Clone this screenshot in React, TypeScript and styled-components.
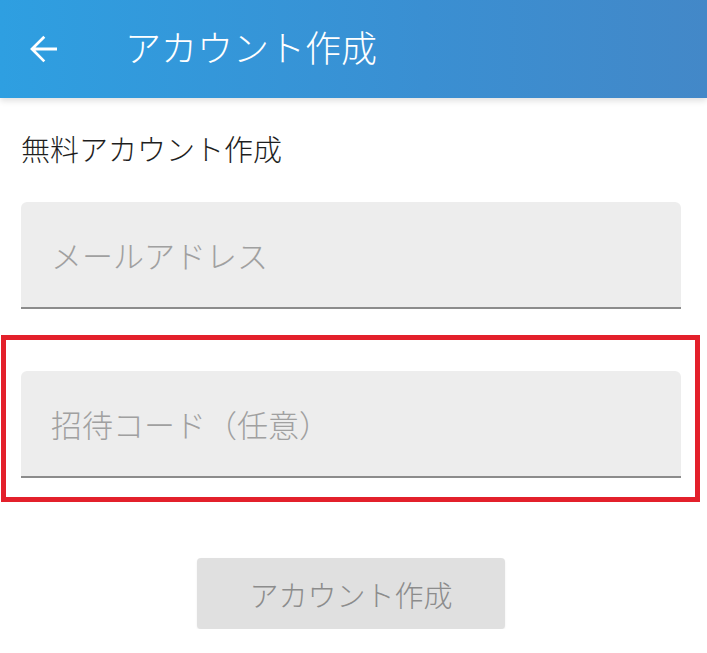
import React from 'react'
import styled, { createGlobalStyle } from 'styled-components'

const FONT = `"Noto Sans CJK JP", Roboto, sans-serif`

const GlobalStyle = createGlobalStyle`
  html, body {
    margin: 0;
    padding: 0;
    background: #ffffff;
    font-family: ${FONT};
  }
`

type FieldProps = {
  readonly placeholder: string
}

const Field: React.FC<FieldProps> = ({ placeholder }: FieldProps) => (
  <StyledField>
    <StyledInput placeholder={placeholder} />
  </StyledField>
)

const BackIcon: React.FC = () => (
  <svg width="42" height="42" viewBox="0 0 24 24" fill="#ffffff">
    <path d="M20 11.1H7.7l5.6-5.6-1.1-1.1L4.6 12l7.6 7.6 1.1-1.1-5.6-5.6H20z" />
  </svg>
)

const App: React.FC = () => (
  <>
    <GlobalStyle />
    <StyledHeader>
      <StyledBackButton aria-label="戻る">
        <BackIcon />
      </StyledBackButton>
      <StyledTitle>アカウント作成</StyledTitle>
    </StyledHeader>
    <StyledContent>
      <StyledSubtitle>無料アカウント作成</StyledSubtitle>
      <Field placeholder="メールアドレス" />
      <StyledHighlight>
        <Field placeholder="招待コード（任意）" />
      </StyledHighlight>
      <StyledSubmitRow>
        <StyledSubmit disabled>アカウント作成</StyledSubmit>
      </StyledSubmitRow>
    </StyledContent>
  </>
)

export default App

const StyledHeader = styled.header`
  display: flex;
  align-items: center;
  height: 98px;
  padding-left: 22px;
  background: linear-gradient(90deg, #2e9fe1 0%, #3a8fd2 60%, #4388c8 100%);
  box-shadow: 0 3px 6px rgba(0, 0, 0, 0.12);
  position: relative;
  z-index: 1;
`

const StyledBackButton = styled.button`
  display: flex;
  align-items: center;
  justify-content: center;
  padding: 0;
  border: none;
  background: transparent;
  width: 42px;
  height: 42px;
`

const StyledTitle = styled.h1`
  margin: 0 0 7px 61px;
  font-family: ${FONT};
  font-weight: 300;
  font-size: 36px;
  line-height: 44px;
  color: #ffffff;
`

const StyledContent = styled.main`
  display: flex;
  flex-direction: column;
  padding: 30px 26px 0 21px;
`

const StyledSubtitle = styled.h2`
  margin: 0 0 34px;
  font-family: ${FONT};
  font-weight: 300;
  font-size: 29px;
  line-height: 40px;
  color: #1e1e1e;
`

const StyledField = styled.div`
  display: flex;
  align-items: center;
  height: 107px;
  padding: 0 0 0 30px;
  box-sizing: border-box;
  background: #ededed;
  border-radius: 6px 6px 0 0;
  border-bottom: 2px solid #8c8c8c;
`

const StyledInput = styled.input`
  flex: 1;
  border: none;
  outline: none;
  background: transparent;
  font-family: ${FONT};
  font-weight: 300;
  font-size: 31px;
  color: #333333;
  padding: 0;

  &::placeholder {
    color: #a0a0a0;
  }
`

const StyledHighlight = styled.div`
  margin: 26px -19px 0 -20px;
  padding: 31px 14px 19px 15px;
  border: 5px solid #e3202b;
`

const StyledSubmitRow = styled.div`
  display: flex;
  justify-content: center;
  padding-top: 56px;
`

const StyledSubmit = styled.button`
  width: 308px;
  height: 71px;
  border: none;
  border-radius: 4px;
  background: #e0e0e0;
  font-family: ${FONT};
  font-weight: 300;
  font-size: 29px;
  color: #8c8c8c;
  box-shadow: 0 1px 2px rgba(0, 0, 0, 0.08);
`
